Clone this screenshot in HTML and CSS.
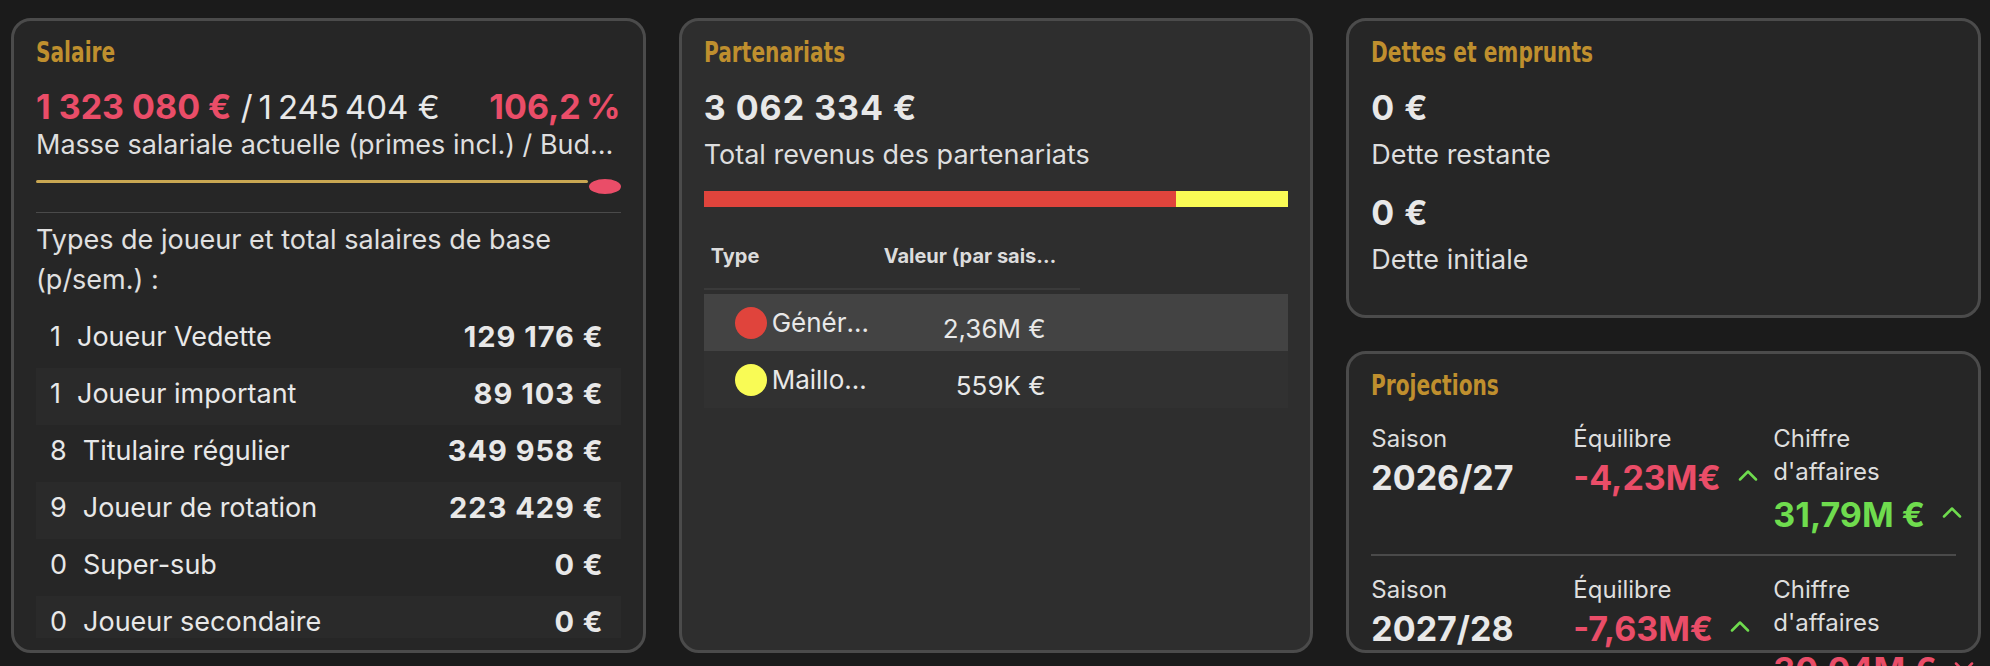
FILE: index.html
```html
<!DOCTYPE html>
<html lang="fr">
<head>
<meta charset="utf-8">
<title>Finances</title>
<link rel="stylesheet" href="styles.css">
</head>
<body>
<main class="dashboard">
  <section class="card card-salary">
    <h2 class="card-title"><span class="title-text">Salaire</span></h2>
    <div class="card-body">
      <div class="salary-figures">
        <div><span class="neg strong">1&nbsp;323&nbsp;080&nbsp;€</span> <span class="budget">/&#8239;1&#8239;245&#8239;404&nbsp;€</span></div>
        <span class="neg strong">106,2&#8239;%</span>
      </div>
      <div class="salary-caption">Masse salariale actuelle (primes incl.) / Budget salarial</div>
      <div class="slider">
        <div class="slider-track"></div>
        <div class="slider-thumb"></div>
      </div>
      <hr class="divider">
      <p class="types-title">Types de joueur et total salaires de base (p/sem.) :</p>
      <ul class="type-list">
        <li class="type-row"><span class="type-label"><span class="count">1</span>Joueur Vedette</span><span class="type-value">129&nbsp;176&nbsp;€</span></li>
        <li class="type-row"><span class="type-label"><span class="count">1</span>Joueur important</span><span class="type-value">89&nbsp;103&nbsp;€</span></li>
        <li class="type-row"><span class="type-label"><span class="count">8</span>Titulaire régulier</span><span class="type-value">349&nbsp;958&nbsp;€</span></li>
        <li class="type-row"><span class="type-label"><span class="count">9</span>Joueur de rotation</span><span class="type-value">223&nbsp;429&nbsp;€</span></li>
        <li class="type-row"><span class="type-label"><span class="count">0</span>Super-sub</span><span class="type-value">0&nbsp;€</span></li>
        <li class="type-row"><span class="type-label"><span class="count">0</span>Joueur secondaire</span><span class="type-value">0&nbsp;€</span></li>
      </ul>
    </div>
  </section>

  <section class="card card-partners">
    <h2 class="card-title"><span class="title-text">Partenariats</span></h2>
    <div class="stat">
      <div class="stat-value">3&nbsp;062&nbsp;334&nbsp;€</div>
      <div class="stat-label">Total revenus des partenariats</div>
    </div>
    <div class="split-bar">
      <span class="seg seg-red" style="width:80.8%"></span>
      <span class="seg seg-yellow" style="width:19.2%"></span>
    </div>
    <div class="grid-table">
      <div class="grid-head">
        <div class="head-cell head-type">Type</div>
        <div class="head-cell head-value">Valeur (par saison)</div>
      </div>
      <div class="grid-row row-selected">
        <div class="cell-type"><span class="dot dot-red"></span><span class="type-name">Général (principal)</span></div>
        <div class="cell-value">2,36M&nbsp;€</div>
      </div>
      <div class="grid-row row-alt">
        <div class="cell-type"><span class="dot dot-yellow"></span><span class="type-name">Maillot principal</span></div>
        <div class="cell-value">559K&nbsp;€</div>
      </div>
    </div>
  </section>

  <section class="card card-debt">
    <h2 class="card-title"><span class="title-text">Dettes et emprunts</span></h2>
    <div class="stat">
      <div class="stat-value">0&nbsp;€</div>
      <div class="stat-label">Dette restante</div>
    </div>
    <div class="stat stat-next">
      <div class="stat-value">0&nbsp;€</div>
      <div class="stat-label">Dette initiale</div>
    </div>
  </section>

  <section class="card card-proj">
    <h2 class="card-title"><span class="title-text">Projections</span></h2>
    <div class="proj">
      <div class="proj-col"><div class="proj-label">Saison</div><div class="proj-value">2026/27</div></div>
      <div class="proj-col"><div class="proj-label">Équilibre</div><div class="proj-value neg">-4,23M€<svg class="caret pos-stroke" viewBox="0 0 20 12"><polyline points="2,10.5 10,2.5 18,10.5"/></svg></div></div>
      <div class="proj-col proj-col-wide"><div class="proj-label label-wrap">Chiffre d'affaires</div><div class="proj-value pos">31,79M&nbsp;€<svg class="caret pos-stroke" viewBox="0 0 20 12"><polyline points="2,10.5 10,2.5 18,10.5"/></svg></div></div>
    </div>
    <div class="proj proj-next">
      <div class="proj-col"><div class="proj-label">Saison</div><div class="proj-value">2027/28</div></div>
      <div class="proj-col"><div class="proj-label">Équilibre</div><div class="proj-value neg">-7,63M€<svg class="caret pos-stroke" viewBox="0 0 20 12"><polyline points="2,10.5 10,2.5 18,10.5"/></svg></div></div>
      <div class="proj-col proj-col-wide"><div class="proj-label label-wrap">Chiffre d'affaires</div><div class="proj-value neg">30,04M&nbsp;€<svg class="caret neg-stroke" viewBox="0 0 20 12"><polyline points="2,2.5 10,10.5 18,2.5"/></svg></div></div>
    </div>
  </section>
</main>
</body>
</html>
```

FILE: styles.css
```css
* {
  box-sizing: border-box;
  margin: 0;
  padding: 0;
}

html, body {
  height: 100%;
}

body {
  background: #1b1b1b;
  color: #e8e8e8;
  font-family: Inter, "Noto Sans", sans-serif;
  overflow: hidden;
}

.dashboard {
  display: grid;
  grid-template-columns: 1fr 1fr 1fr;
  grid-template-rows: 300px 302px;
  column-gap: 33px;
  row-gap: 33px;
  padding: 18px 9px 0 11px;
}

.card {
  background: #262626;
  border: 3px solid #4b4b4b;
  border-radius: 20px;
  padding: 14px 22px 12px;
  min-width: 0;
}

.card-salary,
.card-partners {
  grid-row: span 2;
}

.card-salary {
  display: flex;
  flex-direction: column;
  overflow: hidden;
}

.card-partners {
  background: #2e2e2e;
}

.card-title {
  font-family: "DejaVu Sans", "Liberation Sans", sans-serif;
  font-weight: 700;
  font-size: 28px;
  line-height: 36px;
  color: #bf8f2e;
  white-space: nowrap;
}

.title-text {
  display: inline-block;
  transform: scaleX(0.72);
  transform-origin: left center;
}

.neg { color: #ea4d68; }
.pos { color: #6fdc4e; }

.strong {
  font-weight: 700;
  font-size: 34px;
  letter-spacing: 1.5px;
}

/* Salary card */
.card-body {
  flex: 1;
  min-height: 0;
  overflow: hidden;
  display: flex;
  flex-direction: column;
}

.card-body > * {
  flex-shrink: 0;
}

.salary-figures {
  display: flex;
  justify-content: space-between;
  align-items: baseline;
  margin-top: 16px;
  font-size: 33px;
  line-height: 40px;
  white-space: nowrap;
}

.budget {
  font-weight: 400;
  color: #e8e8e8;
}

.salary-caption {
  font-size: 27px;
  line-height: 36px;
  color: #dedede;
  white-space: nowrap;
  overflow: hidden;
  text-overflow: ellipsis;
}

.slider {
  display: flex;
  align-items: flex-start;
  height: 20px;
  margin-top: 15px;
}

.slider-track {
  flex: 1;
  height: 3px;
  margin-top: 2px;
  background: #c9a752;
  border-radius: 2px;
}

.slider-thumb {
  width: 32px;
  height: 15px;
  margin-top: 1px;
  margin-left: 1px;
  border-radius: 50%;
  background: #ea4d68;
}

.divider {
  border: none;
  border-top: 1px solid #4a4a4a;
  margin-top: 14px;
}

.types-title {
  margin-top: 7px;
  font-size: 27px;
  line-height: 40px;
  color: #e0e0e0;
}

.type-list {
  list-style: none;
  margin-top: 11px;
}

.type-row {
  height: 57px;
  display: flex;
  justify-content: space-between;
  align-items: center;
  padding: 0 17px 5px 14px;
  font-size: 27px;
  line-height: 34px;
}

.type-row:nth-child(even) {
  background: #2a2a2a;
}

.count {
  display: inline-block;
  margin-right: 16px;
}

.type-value {
  font-weight: 700;
  font-size: 29px;
  letter-spacing: 1px;
}

/* Stats */
.stat {
  margin-top: 17px;
}

.stat-next {
  margin-top: 20px;
}

.stat-value {
  font-size: 34px;
  line-height: 40px;
  font-weight: 700;
  letter-spacing: 1px;
}

.stat-label {
  margin-top: 9px;
  font-size: 27px;
  line-height: 36px;
  color: #dedede;
}

/* Partnerships */
.split-bar {
  display: flex;
  height: 16px;
  margin-top: 18px;
}

.seg { display: block; height: 100%; }
.seg-red { background: #e0443c; }
.seg-yellow { background: #f9fb55; }

.grid-table {
  margin-top: 24px;
}

.grid-head {
  display: flex;
  width: 376px;
  padding: 11px 0 18px;
  border-bottom: 2px solid #3a3a3a;
  font-size: 20px;
  line-height: 28px;
  font-weight: 700;
  color: #dcdcdc;
}

.head-cell {
  padding-left: 7px;
  white-space: nowrap;
  overflow: hidden;
  text-overflow: ellipsis;
}

.head-type { width: 173px; }
.head-value { width: 203px; padding-right: 22px; }

.grid-row {
  display: flex;
  align-items: center;
  height: 57px;
  font-size: 26px;
  line-height: 34px;
}

.row-selected {
  margin-top: 4px;
  background: #434343;
}

.row-alt {
  background: #313131;
}

.cell-type {
  width: 173px;
  padding-left: 31px;
  padding-right: 6px;
  display: flex;
  align-items: center;
  gap: 5px;
  min-width: 0;
}

.dot {
  flex: 0 0 32px;
  height: 32px;
  border-radius: 50%;
}

.dot-red { background: #e0443c; }
.dot-yellow { background: #f9fb55; }

.type-name {
  white-space: nowrap;
  overflow: hidden;
  text-overflow: ellipsis;
  min-width: 0;
}

.cell-value {
  width: 203px;
  padding: 12px 34px 0 0;
  text-align: right;
  white-space: nowrap;
}

/* Projections */
.card-proj {
  overflow: visible;
}

.proj {
  display: grid;
  grid-template-columns: 202px 200px 1fr;
  padding: 18px 0 18px;
  border-bottom: 2px solid #4a4a4a;
}

.proj-next {
  padding-top: 17px;
  border-bottom: none;
}

.proj-label {
  font-size: 24px;
  line-height: 33px;
  color: #dedede;
}

.label-wrap {
  max-width: 150px;
}

.proj-value {
  margin-top: 2px;
  display: flex;
  align-items: center;
  gap: 17px;
  font-size: 34px;
  line-height: 42px;
  font-weight: 700;
  white-space: nowrap;
}

.proj-col-wide .proj-value {
  margin-top: 6px;
}

.proj-next .proj-col-wide .proj-value {
  margin-top: 10px;
}

.caret {
  width: 20px;
  height: 12px;
  flex: 0 0 20px;
  margin-top: -6px;
  fill: none;
  stroke-width: 2.5;
  stroke-linecap: round;
  stroke-linejoin: round;
}

.pos-stroke { stroke: #6fdc4e; }
.neg-stroke { stroke: #ea4d68; }
```
